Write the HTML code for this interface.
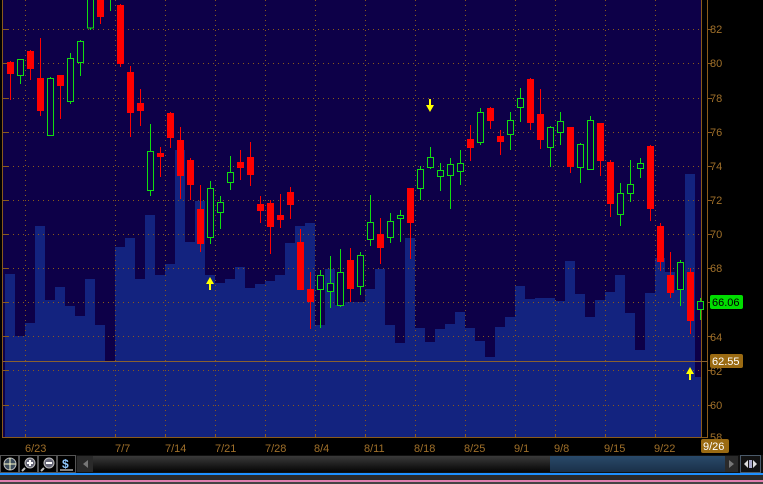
<!DOCTYPE html>
<html><head><meta charset="utf-8"><style>
html,body{margin:0;padding:0;background:#000;width:763px;height:484px;overflow:hidden}
svg{display:block}
text{font-family:"Liberation Sans",sans-serif}
</style></head><body>
<svg width="763" height="484" viewBox="0 0 763 484" xmlns="http://www.w3.org/2000/svg">
<rect x="0" y="0" width="763" height="484" fill="#000"/>
<rect x="3" y="0" width="699" height="437" fill="#0d0048"/>
<path fill="#13237f" d="M5,437 V274 H15 V336 H25 V323 H35 V226 H45 V300 H55 V287 H65 V306 H75 V316 H85 V279 H95 V325 H105 V361 H115 V247 H125 V238 H135 V279 H145 V215 H155 V275 H165 V264 H175 V150 H185 V242 H195 V201 H205 V275 H215 V283 H225 V279 H235 V267 H245 V288 H255 V284 H265 V281 H275 V275 H285 V243 H295 V226 H305 V223 H315 V325 H325 V269 H335 V305 H345 V302 H355 V302 H365 V289 H375 V269 H385 V325 H395 V343 H405 V238 H415 V328 H425 V342 H435 V329 H445 V324 H455 V312 H465 V328 H475 V341 H485 V357 H495 V327 H505 V317 H515 V286 H525 V299 H535 V298 H545 V298 H555 V301 H565 V261 H575 V294 H585 V317 H595 V300 H605 V292 H615 V275 H625 V313 H635 V350 H645 V293 H655 V258 H665 V272 H675 V290 H685 V174 H695 V377 H702 V437 Z"/>
<!-- grid -->
<g stroke="#8a5a1c" stroke-width="1" stroke-dasharray="1,4">
<path d="M8,29.5H702M8,63.5H702M8,98.5H702M8,132.5H702M8,166.5H702M8,200.5H702M8,234.5H702M8,268.5H702M8,302.5H702M8,336.5H702M8,370.5H702M8,405.5H702"/>
<path d="M25.5,0V437M115.5,0V437M165.5,0V437M215.5,0V437M265.5,0V437M315.5,0V437M365.5,0V437M415.5,0V437M465.5,0V437M515.5,0V437M555.5,0V437M605.5,0V437M655.5,0V437"/>
</g>
<g stroke="#8a5a1c" stroke-width="1">
<path d="M2.5,0V438M2,437.5H708M701.5,0V438M707.5,0V438"/>
<path d="M2,29.5H8M2,63.5H8M2,98.5H8M2,132.5H8M2,166.5H8M2,200.5H8M2,234.5H8M2,268.5H8M2,302.5H8M2,336.5H8M2,370.5H8M2,405.5H8"/>
<path d="M707,29.5H712M707,63.5H712M707,98.5H712M707,132.5H712M707,166.5H712M707,200.5H712M707,234.5H712M707,268.5H712M707,302.5H712M707,336.5H712M707,370.5H712M707,405.5H712"/>
<path d="M25.5,434V438M115.5,434V438M165.5,434V438M215.5,434V438M265.5,434V438M315.5,434V438M365.5,434V438M415.5,434V438M465.5,434V438M515.5,434V438M555.5,434V438M605.5,434V438M655.5,434V438"/>
</g>
<path d="M3,361.5H708" stroke="#8a6030" stroke-width="1"/>
<!-- red wicks -->
<path stroke="#ff0000" stroke-width="1" d="M10.5,61V100M30.5,50V80M40.5,38V116M60.5,75V119M100.5,0V24M120.5,4V67M130.5,66V137M140.5,89V126M160.5,147V177M170.5,112V148M180.5,127V199M190.5,158V200M200.5,185V252M240.5,150V180M250.5,142V186M260.5,196V223M270.5,200V254M280.5,194V228M290.5,187V219M300.5,229V290M310.5,272V329M350.5,248V302M380.5,218V264M410.5,188V259M470.5,125V161M490.5,107V129M500.5,130V155M530.5,78V130M540.5,89V149M570.5,127V173M600.5,123V176M610.5,160V217M650.5,145V221M660.5,223V271M670.5,252V298M690.5,268V334"/>
<g fill="#ff0000">
<rect x="7" y="62" width="7" height="12"/><rect x="27" y="51" width="7" height="18"/><rect x="37" y="78" width="7" height="33"/><rect x="57" y="75" width="7" height="11"/><rect x="97" y="0" width="7" height="17"/><rect x="117" y="5" width="7" height="59"/><rect x="127" y="72" width="7" height="41"/><rect x="137" y="103" width="7" height="8"/><rect x="157" y="153" width="7" height="4"/><rect x="167" y="113" width="7" height="25"/><rect x="177" y="140" width="7" height="36"/><rect x="187" y="160" width="7" height="25"/><rect x="197" y="209" width="7" height="35"/><rect x="237" y="162" width="7" height="6"/><rect x="247" y="157" width="7" height="18"/><rect x="257" y="204" width="7" height="7"/><rect x="267" y="203" width="7" height="24"/><rect x="277" y="215" width="7" height="5"/><rect x="287" y="192" width="7" height="13"/><rect x="297" y="242" width="7" height="48"/><rect x="307" y="289" width="7" height="13"/><rect x="347" y="260" width="7" height="29"/><rect x="377" y="234" width="7" height="14"/><rect x="407" y="188" width="7" height="35"/><rect x="467" y="139" width="7" height="9"/><rect x="487" y="108" width="7" height="13"/><rect x="497" y="136" width="7" height="6"/><rect x="527" y="79" width="7" height="44"/><rect x="537" y="114" width="7" height="26"/><rect x="567" y="127" width="7" height="40"/><rect x="597" y="123" width="7" height="38"/><rect x="607" y="162" width="7" height="42"/><rect x="647" y="146" width="7" height="63"/><rect x="657" y="226" width="7" height="36"/><rect x="667" y="275" width="7" height="18"/><rect x="687" y="272" width="7" height="49"/>
</g>
<!-- green wicks -->
<path stroke="#11dd11" stroke-width="1" d="M20.5,59V84M50.5,77V136M70.5,53V104M80.5,40V76M90.5,0V30M110.5,0V11M150.5,124V196M210.5,181V244M220.5,196V229M230.5,156V190M320.5,270V328M330.5,256V308M340.5,249V307M360.5,252V295M370.5,195V246M390.5,213V243M400.5,210V242M420.5,166V200M430.5,147V169M440.5,163V191M450.5,158V209M460.5,150V185M480.5,108V145M510.5,112V150M520.5,88V122M550.5,126V167M560.5,112V145M580.5,143V183M590.5,116V170M620.5,183V226M630.5,160V202M640.5,158V178M680.5,260V306M700.5,298V320"/>
<g fill="#0d0048" stroke="#11dd11" stroke-width="1">
<rect x="17.5" y="59.5" width="6" height="16"/><rect x="47.5" y="78.5" width="6" height="57"/><rect x="67.5" y="58.5" width="6" height="43"/><rect x="77.5" y="41.5" width="6" height="21"/><rect x="87.5" y="-5" width="6" height="33"/><rect x="147.5" y="151.5" width="6" height="39"/><rect x="207.5" y="188.5" width="6" height="49"/><rect x="217.5" y="202.5" width="6" height="10"/><rect x="227.5" y="172.5" width="6" height="10"/><rect x="317.5" y="275.5" width="6" height="14"/><rect x="327.5" y="283.5" width="6" height="8"/><rect x="337.5" y="272.5" width="6" height="33"/><rect x="357.5" y="255.5" width="6" height="31"/><rect x="367.5" y="222.5" width="6" height="17"/><rect x="387.5" y="221.5" width="6" height="16"/><rect x="397.5" y="215.5" width="6" height="3"/><rect x="417.5" y="169.5" width="6" height="19"/><rect x="427.5" y="157.5" width="6" height="10"/><rect x="437.5" y="170.5" width="6" height="6"/><rect x="447.5" y="164.5" width="6" height="11"/><rect x="457.5" y="163.5" width="6" height="8"/><rect x="477.5" y="112.5" width="6" height="30"/><rect x="507.5" y="120.5" width="6" height="14"/><rect x="517.5" y="98.5" width="6" height="9"/><rect x="547.5" y="127.5" width="6" height="20"/><rect x="557.5" y="121.5" width="6" height="11"/><rect x="577.5" y="144.5" width="6" height="23"/><rect x="587.5" y="120.5" width="6" height="49"/><rect x="617.5" y="193.5" width="6" height="21"/><rect x="627.5" y="184.5" width="6" height="9"/><rect x="637.5" y="163.5" width="6" height="5"/><rect x="677.5" y="262.5" width="6" height="27"/><rect x="697.5" y="301.5" width="6" height="8"/>
</g>
<!-- arrows -->
<g fill="#ffff00">
<path d="M210,277 L214,284 H211 V290 H209 V284 H206 Z"/>
<path d="M430,112 L434,105 H431 V99 H429 V105 H426 Z"/>
<path d="M690,367 L694,374 H691 V380 H689 V374 H686 Z"/>
</g>
<!-- price labels -->
<g fill="#a0702a" font-size="11">
<text x="710" y="33">82</text><text x="710" y="67">80</text><text x="710" y="102">78</text><text x="710" y="136">76</text><text x="710" y="170">74</text><text x="710" y="204">72</text><text x="710" y="238">70</text><text x="710" y="272">68</text><text x="710" y="341">64</text><text x="710" y="375">62</text><text x="710" y="409">60</text><text x="710" y="441">58</text>
</g>
<rect x="710" y="295" width="33" height="14" rx="2" fill="#00dd00"/>
<text x="712" y="306" font-size="11" fill="#000">66.06</text>
<rect x="710" y="354" width="33" height="14" rx="2" fill="#9a6a12"/>
<text x="712" y="365" font-size="11" fill="#fff">62.55</text>
<!-- date labels -->
<g fill="#a0702a" font-size="11">
<text x="25" y="452">6/23</text><text x="115" y="452">7/7</text><text x="165" y="452">7/14</text><text x="215" y="452">7/21</text><text x="265" y="452">7/28</text><text x="314" y="452">8/4</text><text x="364" y="452">8/11</text><text x="414" y="452">8/18</text><text x="464" y="452">8/25</text><text x="514" y="452">9/1</text><text x="554" y="452">9/8</text><text x="604" y="452">9/15</text><text x="654" y="452">9/22</text>
</g>
<rect x="701" y="439" width="28" height="14" rx="2" fill="#9a6a12"/>
<text x="703" y="450" font-size="11" fill="#fff">9/26</text>
<!-- toolbar -->
<defs><linearGradient id="tb" x1="0" y1="0" x2="0" y2="1"><stop offset="0" stop-color="#3a3a3a"/><stop offset="1" stop-color="#050505"/></linearGradient>
<linearGradient id="th" x1="0" y1="0" x2="0" y2="1"><stop offset="0" stop-color="#2a4a6a"/><stop offset="1" stop-color="#1a3048"/></linearGradient></defs>
<rect x="0" y="455" width="763" height="18" fill="#111"/>
<rect x="93" y="456" width="645" height="16" fill="url(#tb)"/>
<rect x="550" y="456" width="175" height="16" fill="url(#th)"/>
<rect x="725" y="456" width="13" height="16" fill="#2a2a2a"/>
<path d="M729,460 L734,464 L729,468Z" fill="#777"/>
<rect x="77" y="456" width="16" height="16" fill="#2a2a2a"/>
<path d="M88,460 L83,464 L88,468Z" fill="#777"/>
<g fill="#000" stroke="#555">
<rect x="0.5" y="455.5" width="18" height="17"/><rect x="19.5" y="455.5" width="18" height="17"/><rect x="38.5" y="455.5" width="18" height="17"/><rect x="57.5" y="455.5" width="18" height="17"/>
</g>
<circle cx="10" cy="464" r="6" fill="#3a4a5a" stroke="#bbb"/>
<path d="M4,464H16M10,458V470" stroke="#ffffcc" stroke-width="1"/>
<circle cx="30" cy="463" r="5" fill="#667" stroke="#bbb"/>
<path d="M27,463H33M30,460V466" stroke="#fff" stroke-width="2"/>
<path d="M25,468L22,471" stroke="#bbb" stroke-width="2"/>
<circle cx="49" cy="463" r="5" fill="#667" stroke="#bbb"/>
<path d="M46,463H52" stroke="#fff" stroke-width="2"/>
<path d="M44,468L41,471" stroke="#bbb" stroke-width="2"/>
<text x="62" y="468" font-size="12" font-weight="bold" fill="#8fc8ff">$</text>
<path d="M60,470H73" stroke="#fff"/>
<rect x="740.5" y="455.5" width="20" height="17" fill="#111" stroke="#4a5a6a"/>
<path d="M744,464L748,460V468Z M757,464L753,460V468Z" fill="#ddd"/>
<rect x="749" y="460" width="3" height="8" fill="#aac"/>
<rect x="0" y="473" width="763" height="2" fill="#1e90ff"/>
<rect x="0" y="475" width="763" height="5" fill="#2a2a2a"/>
<rect x="0" y="480" width="763" height="2" fill="#e080b0"/>
<rect x="0" y="482" width="763" height="2" fill="#444"/>
</svg>
</body></html>
